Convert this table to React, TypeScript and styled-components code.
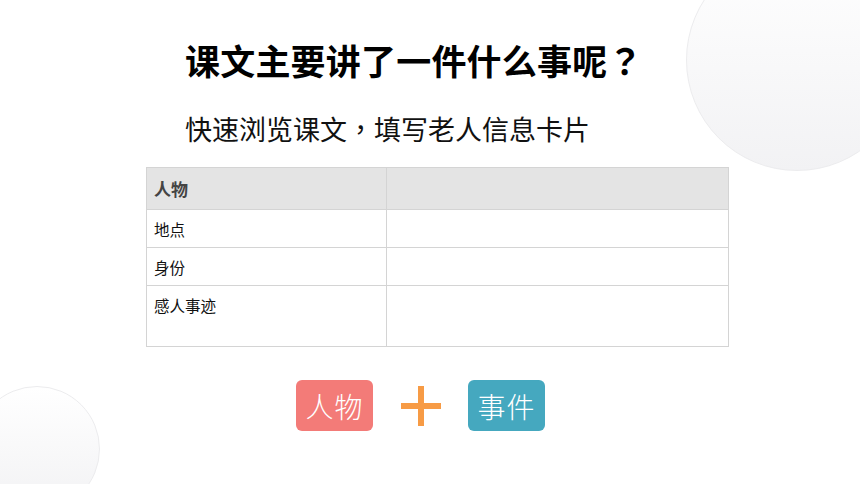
import * as React from 'react';
import styled, { createGlobalStyle } from 'styled-components';

const GlobalStyle = createGlobalStyle`
    html, body {
        margin: 0;
        padding: 0;
        background: #ffffff;
    }
    body {
        font-family: "Noto Sans CJK SC", "Noto Sans", sans-serif;
        text-spacing-trim: space-all;
    }
`;

const Page = styled.div`
    position: relative;
    width: 860px;
    height: 484px;
    overflow: hidden;
    background: #ffffff;
    display: flex;
    flex-direction: column;
`;

const Circle = styled.div<{ $size: number; $top: number; $left: number }>`
    position: absolute;
    top: ${p => p.$top}px;
    left: ${p => p.$left}px;
    width: ${p => p.$size}px;
    height: ${p => p.$size}px;
    border-radius: 50%;
    background: linear-gradient(180deg, #ffffff 0%, #f2f2f4 100%);
    border: 1px solid #ececee;
    box-sizing: border-box;
`;

const Content = styled.div`
    position: relative;
    display: flex;
    flex-direction: column;
    padding-top: 35px;
`;

const Title = styled.h1`
    margin: 0 0 0 185px;
    font-size: 35px;
    line-height: 50px;
    font-weight: 700;
    color: #000;
    letter-spacing: 0.2px;
    text-spacing-trim: space-all;
`;

const Subtitle = styled.div`
    margin: 25px 0 0 185px;
    font-size: 27px;
    line-height: 38px;
    color: #111;
`;

const Punct = styled.span`
    font-family: "Noto Sans CJK TC", sans-serif;
`;

const Card = styled.table`
    margin: 19px 0 0 146px;
    width: 583px;
    border-collapse: collapse;
    color: #111;
    table-layout: fixed;
`;

const Cell = styled.td<{ $height: number; $head?: boolean }>`
    height: ${p => p.$height}px;
    box-sizing: border-box;
    border: 1px solid #d4d4d4;
    background: ${p => (p.$head ? '#e4e4e4' : '#ffffff')};
    padding: ${p => (p.$head ? '0 7px' : '8px 7px 0')};
    vertical-align: ${p => (p.$head ? 'middle' : 'top')};
    font-size: ${p => (p.$head ? '17px' : '15.5px')};
    font-weight: ${p => (p.$head ? 700 : 400)};
    color: ${p => (p.$head ? '#444' : '#111')};
    line-height: 22px;
`;

const Combo = styled.div`
    display: flex;
    align-items: center;
    margin: 33px 0 0 296px;
`;

const Badge = styled.div<{ $color: string }>`
    width: 77px;
    height: 51px;
    border-radius: 6px;
    background: ${p => p.$color};
    color: #fff;
    font-size: 28px;
    font-weight: 300;
    display: flex;
    align-items: center;
    justify-content: center;
    letter-spacing: 1px;
`;

const Plus = styled.div`
    width: 95px;
    display: flex;
    justify-content: center;
`;

const rows = [
    { label: '地点', height: 38 },
    { label: '身份', height: 38 },
    { label: '感人事迹', height: 61 },
];

export default function App() {
    return (
        <Page>
            <GlobalStyle />
            <Circle $size={222} $top={-51} $left={686} />
            <Circle $size={126} $top={386} $left={-26} />
            <Content>
                <Title>课文主要讲了一件什么事呢<Punct>？</Punct></Title>
                <Subtitle>快速浏览课文<Punct>，</Punct>填写老人信息卡片</Subtitle>
                <Card>
                    <colgroup>
                        <col style={{ width: 240 }} />
                        <col />
                    </colgroup>
                    <tbody>
                        <tr>
                            <Cell $height={42} $head>人物</Cell>
                            <Cell $height={42} $head />
                        </tr>
                        {rows.map(r => (
                            <tr key={r.label}>
                                <Cell $height={r.height}>{r.label}</Cell>
                                <Cell $height={r.height} />
                            </tr>
                        ))}
                    </tbody>
                </Card>
                <Combo>
                    <Badge $color="#f37b78">人物</Badge>
                    <Plus>
                        <svg width="40" height="40" viewBox="0 0 40 40">
                            <rect x="0" y="17" width="40" height="6" fill="#f79b45" />
                            <rect x="17" y="0" width="6" height="40" fill="#f79b45" />
                        </svg>
                    </Plus>
                    <Badge $color="#45a8bf">事件</Badge>
                </Combo>
            </Content>
        </Page>
    );
}
